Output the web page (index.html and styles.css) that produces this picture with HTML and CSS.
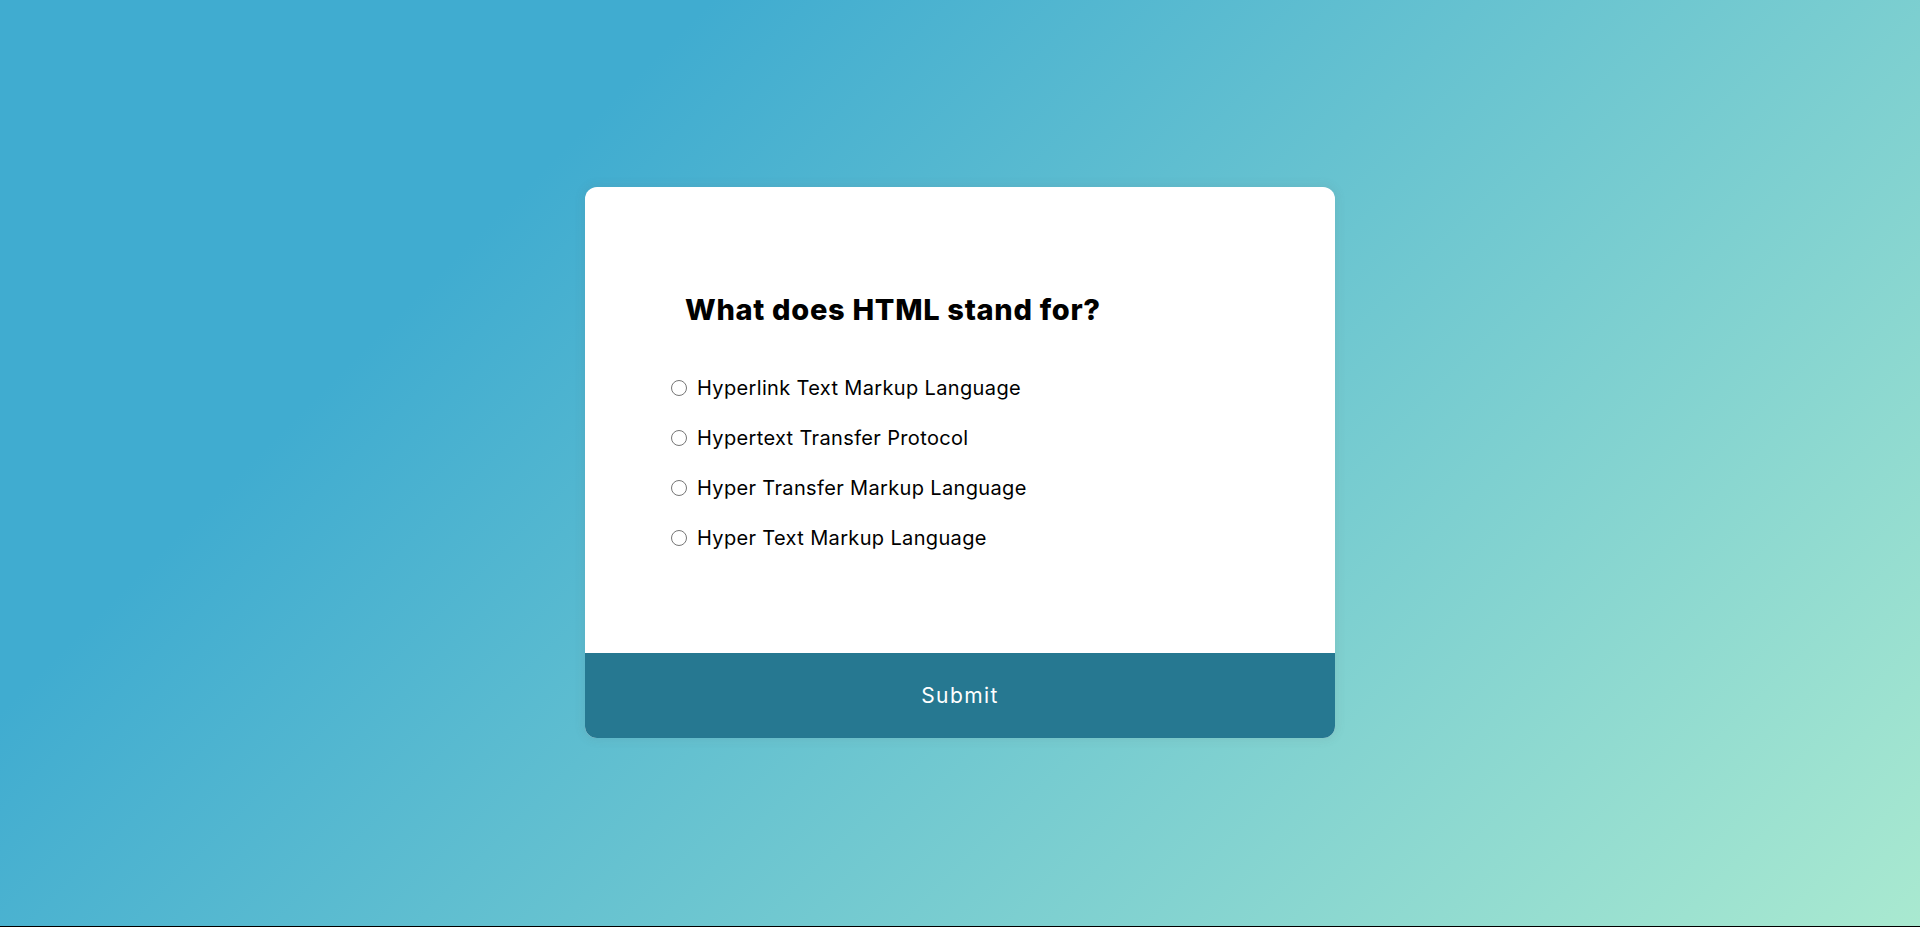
FILE: index.html
```html
<!DOCTYPE html>
<html lang="en">
<head>
<meta charset="UTF-8">
<title>Quiz App</title>
<link rel="stylesheet" href="styles.css">
</head>
<body>
<div class="page">
  <div class="quiz-container">
    <div class="quiz-header">
      <h2 class="question">What does HTML stand for?</h2>
      <ul class="answers">
        <li class="answer"><input type="radio" name="answer" id="a" class="radio"><label for="a" class="answer-text">Hyperlink Text Markup Language</label></li>
        <li class="answer"><input type="radio" name="answer" id="b" class="radio"><label for="b" class="answer-text">Hypertext Transfer Protocol</label></li>
        <li class="answer"><input type="radio" name="answer" id="c" class="radio"><label for="c" class="answer-text">Hyper Transfer Markup Language</label></li>
        <li class="answer"><input type="radio" name="answer" id="d" class="radio"><label for="d" class="answer-text">Hyper Text Markup Language</label></li>
      </ul>
    </div>
    <button class="submit">Submit</button>
  </div>
</div>
</body>
</html>
```
FILE: styles.css
```css
* { box-sizing: border-box; }
html { background: #000; }
body {
  margin: 0;
  font-family: Inter, "Noto Sans", sans-serif;
}
.page {
  height: calc(100vh - 1px);
  background: linear-gradient(135deg, #40acd0 25%, #a9e9d0 100%);
  display: flex;
  align-items: center;
  justify-content: center;
  overflow: hidden;
}
.quiz-container {
  width: 750px;
  background: #fff;
  border-radius: 12px;
  overflow: hidden;
  margin-bottom: 1px;
  box-shadow: 0 0 10px 2px rgba(100, 100, 100, 0.1);
}
.quiz-header {
  height: 466px;
  padding: 105px 86px 0;
}
.question {
  margin: 0 0 0 14px;
  font-size: 29px;
  font-weight: 800;
  line-height: 36px;
  color: #000;
  letter-spacing: 0.7px;
}
.answers {
  list-style: none;
  margin: 35px 0 0;
  padding: 0;
}
.answer {
  display: flex;
  align-items: center;
  height: 50px;
  font-size: 20px;
  letter-spacing: 0.35px;
  color: #000;
}
.radio {
  width: 16px;
  height: 16px;
  margin: 0 10px 0 0;
  flex: none;
}
.answer-text { cursor: pointer; }
.submit {
  display: block;
  width: 100%;
  height: 85px;
  border: none;
  background: #267891;
  color: #fff;
  font-family: inherit;
  font-size: 21px;
  letter-spacing: 1.4px;
  cursor: pointer;
}
```
